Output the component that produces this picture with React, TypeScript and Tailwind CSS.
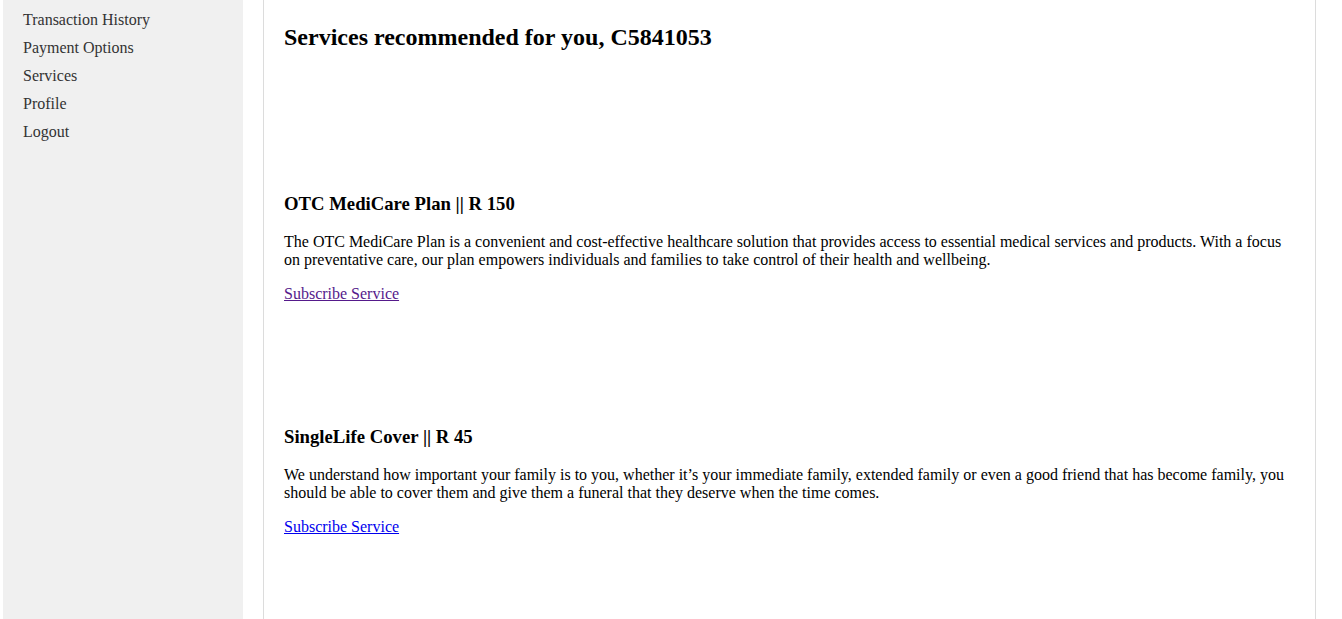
import React from "react";

const serif = { fontFamily: '"Liberation Serif", "Times New Roman", serif' };

export default function App() {
  return (
    <div className="flex min-h-screen bg-white text-black" style={serif}>
      <div className="ml-[3px] w-[240px] shrink-0 bg-[#f0f0f0] pl-[20px] pt-[6px]">
        {["Transaction History", "Payment Options", "Services", "Profile", "Logout"].map((t) => (
          <div key={t} className="text-[16px] leading-[28px] text-[#333]">
            {t}
          </div>
        ))}
      </div>
      <div className="ml-[20px] w-[1053px] shrink-0 border-x border-[#dcdcdc] pl-[20px] pr-[20px]">
        <h2 className="mt-[23px] text-[24px] font-bold leading-[28px]">
          Services recommended for you, C5841053
        </h2>
        <div className="pt-[142px]">
          <h3 className="text-[18.72px] font-bold leading-[22px]">OTC MediCare Plan || R 150</h3>
          <p className="mt-[18px] text-[16px] leading-[18px]">
            The OTC MediCare Plan is a convenient and cost-effective healthcare solution that provides access to essential medical services and products. With a focus on preventative care, our plan empowers individuals and families to take control of their health and wellbeing.
          </p>
          <a href="#" className="mt-[16px] block w-fit text-[16px] leading-[18px] text-[#551a8b] underline">
            Subscribe Service
          </a>
        </div>
        <div className="pt-[123px]">
          <h3 className="text-[18.72px] font-bold leading-[22px]">SingleLife Cover || R 45</h3>
          <p className="mt-[18px] text-[16px] leading-[18px]">
            We understand how important your family is to you, whether it’s your immediate family, extended family or even a good friend that has become family, you should be able to cover them and give them a funeral that they deserve when the time comes.
          </p>
          <a href="#" className="mt-[16px] block w-fit text-[16px] leading-[18px] text-[#0000ee] underline">
            Subscribe Service
          </a>
        </div>
      </div>
    </div>
  );
}
